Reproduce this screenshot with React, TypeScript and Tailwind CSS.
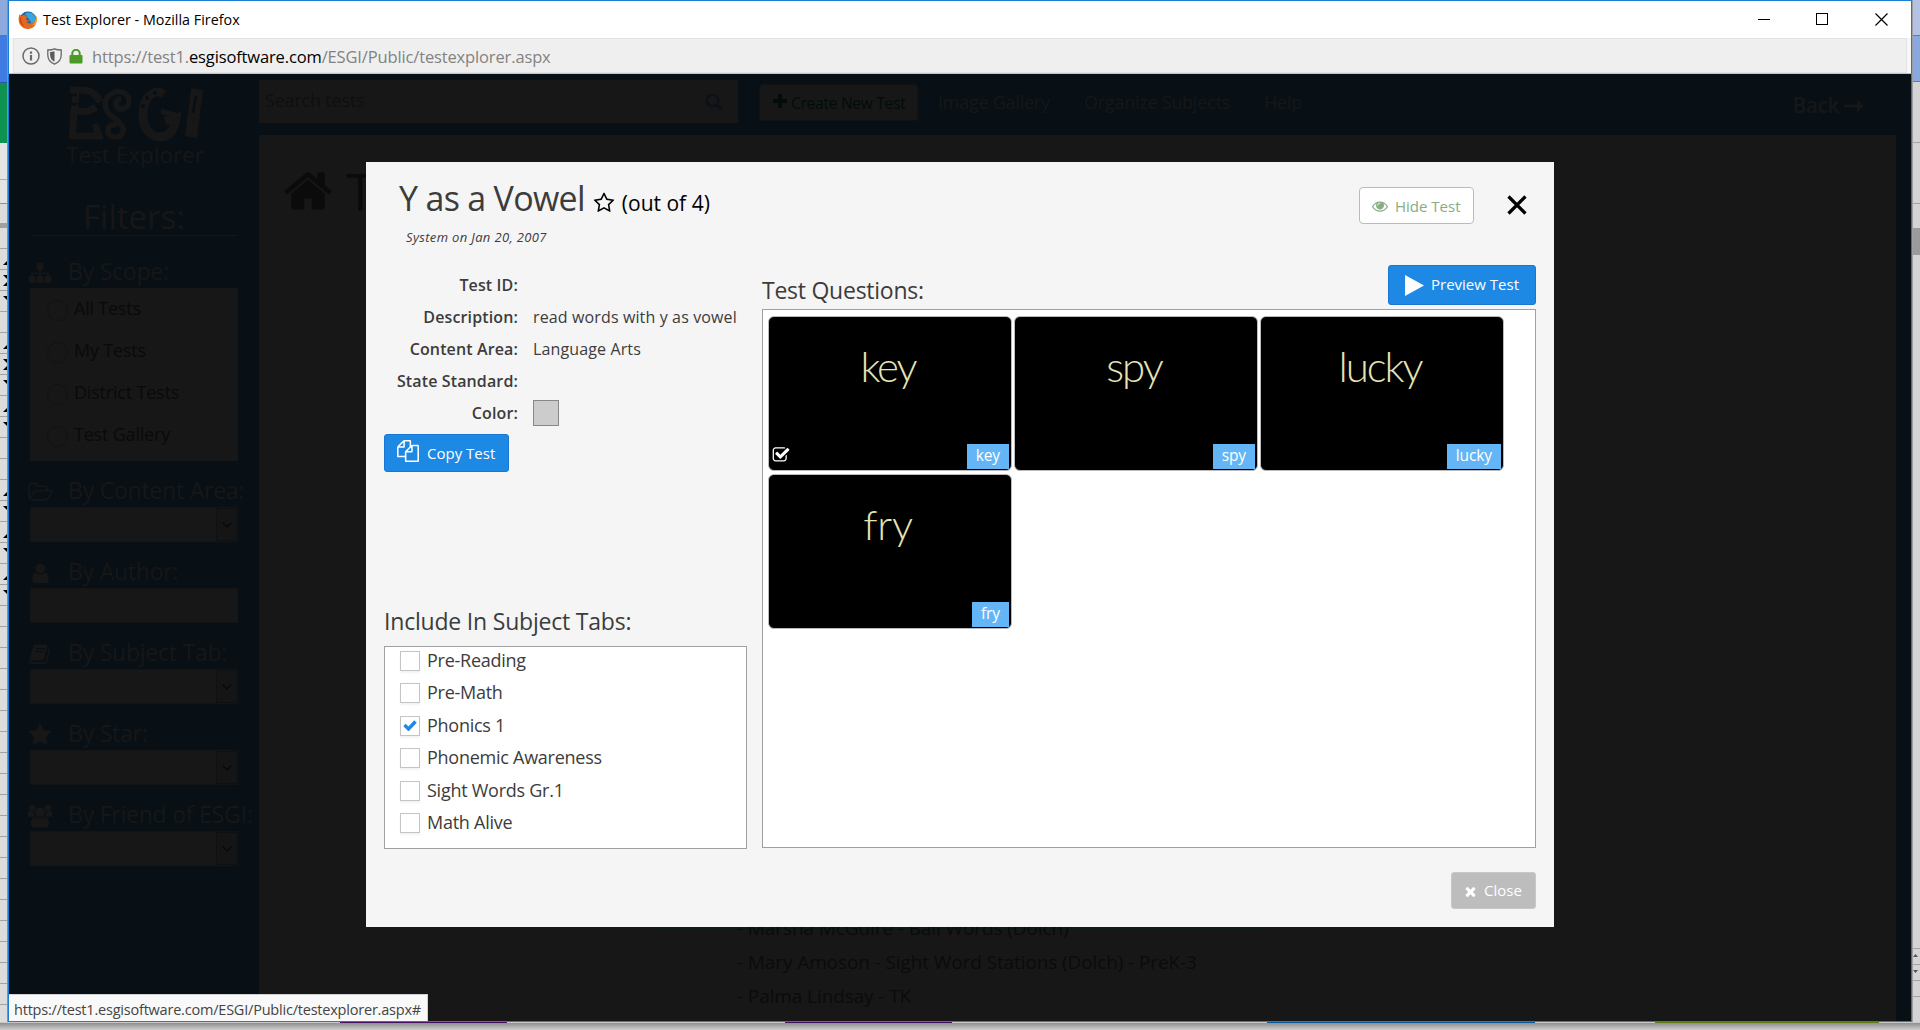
import type { ReactNode } from 'react';

const STAR =
  'M1728 647q0 22-26 48l-363 354 86 500q1 7 1 20 0 21-10.5 35.5t-30.5 14.5q-19 0-40-12l-449-236-449 236q-22 12-40 12-21 0-31.5-14.5t-10.5-35.5q0-6 2-20l86-500-364-354q-25-27-25-48 0-37 56-46l502-73 225-455q19-41 49-41t49 41l225 455 502 73q56 9 56 46z';
const STAR_O =
  'M1201 1004l306-297-422-62-189-382-189 382-422 62 306 297-73 421 378-199 377 199zm527-357q0 22-26 48l-363 354 86 500q1 7 1 20 0 50-41 50-19 0-40-12l-449-236-449 236q-22 12-40 12-21 0-31.5-14.5t-10.5-35.5q0-6 2-20l86-500-364-354q-25-27-25-48 0-37 56-46l502-73 225-455q19-41 49-41t49 41l225 455 502 73q56 9 56 46z';
const TIMES =
  'M1490 1322q0 40-28 68l-136 136q-28 28-68 28t-68-28l-294-294-294 294q-28 28-68 28t-68-28l-136-136q-28-28-28-68t28-68l294-294-294-294q-28-28-28-68t28-68l136-136q28-28 68-28t68 28l294 294 294-294q28-28 68-28t68 28l136 136q28 28 28 68t-28 68l-294 294 294 294q28 28 28 68z';
const EYE =
  'M1664 960q-152-236-381-353 61 104 61 225 0 185-131.5 316.5t-316.5 131.5-316.5-131.5-131.5-316.5q0-121 61-225-229 117-381 353 133 205 333.5 326.5t434.5 121.5 434.5-121.5 333.5-326.5zm-720-384q0-20-14-34t-34-14q-125 0-214.5 89.5t-89.5 214.5q0 20 14 34t34 14 34-14 14-34q0-86 61-147t147-61q20 0 34-14t14-34zm848 384q0 34-20 69-140 230-376.5 368.5t-499.5 138.5-499.5-139-376.5-368q-20-35-20-69t20-69q140-229 376.5-368t499.5-139 499.5 139 376.5 368q20 35 20 69z';
const CHECK_SQUARE =
  'M1472 930v318q0 119-84.5 203.5t-203.5 84.5h-832q-119 0-203.5-84.5t-84.5-203.5v-832q0-119 84.5-203.5t203.5-84.5h832q63 0 117 25 15 7 18 23 3 17-9 29l-49 49q-10 10-23 10-3 0-9-2-23-6-45-6h-832q-66 0-113 47t-47 113v832q0 66 47 113t113 47h832q66 0 113-47t47-113v-254q0-13 9-22l64-64q10-10 23-10 6 0 12 3 20 8 20 29zm231-489l-814 814q-24 24-57 24t-57-24l-430-430q-24-24-24-57t24-57l110-110q24-24 57-24t57 24l263 263 647-647q24-24 57-24t57 24l110 110q24 24 24 57t-24 57z';
const FILES =
  'M1696 384q40 0 68 28t28 68v1216q0 40-28 68t-68 28h-960q-40 0-68-28t-28-68v-288h-544q-40 0-68-28t-28-68v-672q0-40 20-88t48-76l408-408q28-28 76-48t88-20h416q40 0 68 28t28 68v328q68-40 128-40h416zm-544 213l-299 299h299v-299zm-640-384l-299 299h299v-299zm196 647l316-316v-416h-384v416q0 40-28 68t-68 28h-416v640h512v-256q0-40 20-88t48-76zm956 804v-1152h-384v416q0 40-28 68t-68 28h-416v640h896z';
const HOME =
  'M1472 992v480q0 26-19 45t-45 19h-384v-384h-256v384h-384q-26 0-45-19t-19-45v-480q0-1 .5-3t.5-3l575-474 575 474q1 2 1 6zm223-69l-62 74q-8 9-21 11h-3q-13 0-21-7l-692-577-692 577q-12 8-24 7-13-2-21-11l-62-74q-8-10-7-23.5t11-21.5l719-599q32-26 76-26t76 26l244 204v-195q0-14 9-23t23-9h192q14 0 23 9t9 23v408l219 182q10 8 11 21.5t-7 23.5z';
const USER =
  'M1536 1399q0 109-62.5 187t-150.5 78h-854q-88 0-150.5-78t-62.5-187q0-85 8.5-160.5t31.5-152 58.5-131 94-89 134.5-34.5q131 128 313 128t313-128q76 0 134.5 34.5t94 89 58.5 131 31.5 152 8.5 160.5zm-256-887q0 159-112.5 271.5t-271.5 112.5-271.5-112.5-112.5-271.5 112.5-271.5 271.5-112.5 271.5 112.5 112.5 271.5z';

function Glyph({ d, className }: { d: string; className: string }) {
  return (
    <svg viewBox="0 0 1792 1792" fill="currentColor" className={className}>
      <path d={d} />
    </svg>
  );
}

function SitemapIcon() {
  return (
    <svg viewBox="0 0 24 22" className="h-[22px] w-6 fill-[#171717]">
      <rect x="8.5" y="1" width="7" height="7" rx="1" />
      <rect x="0.5" y="14" width="7" height="7" rx="1" />
      <rect x="8.5" y="14" width="7" height="7" rx="1" />
      <rect x="16.5" y="14" width="7" height="7" rx="1" />
      <path d="M11.2 8h1.6v6h-1.6zM3.2 10.4h17.6v1.5H3.2zM3.2 10.4h1.6V14H3.2zM19.2 10.4h1.6V14h-1.6z" />
    </svg>
  );
}

function FolderIcon() {
  return (
    <svg viewBox="0 0 25 20" fill="none" stroke="#171717" strokeWidth="1.6" strokeLinejoin="round" className="h-5 w-[25px]">
      <path d="M1.2 15.5V3.4a2 2 0 0 1 2-2h3.6a2 2 0 0 1 2 2v.8h8.4a2 2 0 0 1 2 2v2.6M1.4 16.6l4.6-6.4a3.4 3.4 0 0 1 2.8-1.4h14.4c.9 0 1.1.7.7 1.4l-4.2 6.3a3.4 3.4 0 0 1-2.7 1.4H3.2c-1.1 0-1.8-.6-1.8-1.3z" />
    </svg>
  );
}

function BookIcon() {
  return (
    <svg viewBox="0 0 24 22" className="h-[22px] w-6">
      <path
        d="M7.5 1.5h10.3c1.3 0 1.8 1 1.5 2l-3.4 12c-.4 1.3-1.3 1.8-2.5 1.8H3.800c-1 0-1.300.6-1 1.200.3.6 1 .8 1.800.8h11.200c1 0 1.500-.5 1.800-1.400L21.200 5c.8.4 1.300 1.100 1 2l-3.500 12c-.4 1.300-1.400 2-2.700 2H4.200C2 21 .6 19.100 1.200 17.200L5.200 3.500c.4-1.300 1.200-2 2.300-2z"
        fill="#171717"
      />
      <path d="M8.2 5.6h8.5M7.2 8.7h8.5" stroke="#080f15" strokeWidth="1.3" />
    </svg>
  );
}

function UsersIcon() {
  return (
    <svg viewBox="0 0 26 24" className="h-6 w-[26px] fill-[#171717]">
      <circle cx="5.3" cy="4" r="3.2" />
      <circle cx="20.7" cy="4" r="3.2" />
      <circle cx="13" cy="8.5" r="5" />
      <path d="M.5 11c0-2.600.8-4.200 2.200-4.200 1 .9 3 1.200 4.300.8-.5 2 0 3.800 1 5.100H3C1.300 12.700.5 12.300.5 11zM25.500 11c0-2.600-.8-4.200-2.200-4.200-1 .9-3 1.200-4.300.8.5 2 0 3.800-1 5.100h5c1.700 0 2.500-.4 2.500-1.700zM4 19.800c0-4 1.200-7 4.200-7 2.400 2 7.200 2 9.600 0 3 0 4.200 3 4.200 7 0 2.200-1.300 3.700-3.500 3.700h-11C5.300 23.500 4 22 4 19.800z" />
    </svg>
  );
}

function FirefoxIcon() {
  return (
    <svg viewBox="0 0 20 20" className="h-5 w-5">
      <circle cx="10" cy="10" r="8.5" fill="#1f5fa8" />
      <path d="M7 3.500c4-2.500 9-.5 10.200 3.500.8 3-.7 6-3.200 7z" fill="#36a6dd" />
      <path
        d="M1.600 4.200C0 8 .3 13.200 3.300 16.300c3.700 3.700 9.700 3.500 13-.1 3-3.300 3.300-8 1.300-11.400.4 2.900 0 5.400-1.800 7-2.500 2.200-6 1.800-7.300-.1 1.500.2 2.500-.5 3-1.300-2 .3-3.400-.3-3.600-1.800.9-.4 1.700-.8 1.800-1.700-1.200-.2-2-.8-2.300-2-1.800-.2-3 .4-3.800 1.300-.8-.5-1.200-1.200-2-2z"
        fill="#e4691c"
      />
      <path d="M17.600 4.800c.9 3.600.2 8.600-3.400 10.800 4-.6 5.700-6 3.400-10.800z" fill="#f9c440" />
      <path d="M2 7.500c-.5 3.500 1 7.500 4.500 9C4 14 3 11 3.200 8.500z" fill="#c63d14" />
    </svg>
  );
}

function FilterHead({ icon, children }: { icon: ReactNode; children: ReactNode }) {
  return (
    <div className="flex h-[34px] shrink-0 items-center">
      <span className="flex w-[38px] shrink-0 justify-start pt-1">
        <span className="-ml-[3px] flex w-[26px] shrink-0 items-center justify-center">{icon}</span>
      </span>
      <span className="text-[23px] leading-[34px] tracking-[-0.23px] whitespace-nowrap">{children}</span>
    </div>
  );
}

function Select({ arrow = true }: { arrow?: boolean }) {
  return (
    <div className="mb-3 flex h-[35px] w-[208px] shrink-0 justify-end border border-[#141414] bg-[#171717]">
      {arrow && (
        <span className="flex w-[21px] items-center justify-center border border-[#101010] bg-[#151515]">
          <svg viewBox="0 0 10 6" className="h-[6px] w-[10px]" fill="none" stroke="#070707" strokeWidth="1.2">
            <path d="M.7.7 5 5 9.3.7" />
          </svg>
        </span>
      )}
    </div>
  );
}

function Sidebar() {
  return (
    <aside className="flex w-[250px] shrink-0 flex-col bg-[#080f15] pl-[21px] text-[#171717]">
      <div className="flex h-[94px] w-[208px] flex-col items-center pl-[2px]">
        <svg viewBox="0 0 136 58" className="mt-[11px] h-[58px] w-[136px] shrink-0" fill="none" stroke="#171717">
          <path d="M9 4 5 54M4 51h28l-4-12M9 25c10 3 14 1 20-3M3 5h14c8 1 13 5 16 12" strokeWidth="7" />
          <path d="M2 10h8M2 19h8" stroke="#080f15" strokeWidth="2.5" />
          <path d="M54 14c-4 0-7 4-4 8s12 2 12-6c0-9-11-12-18-7-9 6-7 17 2 23 9 7 13 13 8 18-5 4-14 2-13-5 0-5 6-7 8-3" strokeWidth="5.5" />
          <path d="M97 9c-10-6-20 3-21 18-1 14 6 25 17 25 9 0 14-6 16-19l-11 3" strokeWidth="9" />
          <path d="m114 32-20-6" strokeWidth="5" />
          <path d="m130 4-6 48" strokeWidth="12" />
          <path d="m129 11-3 17" stroke="#080f15" strokeWidth="2.5" />
          <g fill="#080f15" stroke="none">
            <circle cx="88" cy="8" r="2" />
            <circle cx="80" cy="13" r="2" />
            <circle cx="76" cy="21" r="2" />
          </g>
        </svg>
        <div className="mt-[-2px] text-[22.5px] leading-[28px] whitespace-nowrap">Test Explorer</div>
      </div>
      <div className="mt-[27px] h-10 w-[208px] text-center text-[33px] leading-[44px]">Filters:</div>
      <div className="ml-[2px] w-[205px] border-t border-[#171717]" />
      <div className="h-[18px]" />
      <FilterHead icon={<SitemapIcon />}>By Scope:</FilterHead>
      <div className="mb-[12px] flex h-[173px] w-[208px] shrink-0 flex-col bg-[#171717] pl-[17px] text-lg text-[#0a0a0a]">
        {['All Tests', 'My Tests', 'District Tests', 'Test Gallery'].map((t) => (
          <div key={t} className="flex h-[42px] items-center gap-[6px]">
            <span className="mt-[2px] h-[21px] w-[21px] rounded-full border border-[#121212]" />
            <span className="mb-[2px] tracking-[-0.2px]">{t}</span>
          </div>
        ))}
      </div>
      <FilterHead icon={<FolderIcon />}>By Content Area:</FilterHead>
      <Select />
      <FilterHead icon={<Glyph d={USER} className="h-[23px] w-[23px]" />}>By Author:</FilterHead>
      <Select arrow={false} />
      <FilterHead icon={<BookIcon />}>By Subject Tab:</FilterHead>
      <Select />
      <FilterHead icon={<Glyph d={STAR} className="h-[24px] w-[24px]" />}>By Star:</FilterHead>
      <Select />
      <FilterHead icon={<UsersIcon />}>By Friend of ESGI:</FilterHead>
      <Select />
    </aside>
  );
}

function TopBar() {
  return (
    <div className="flex h-[61px] shrink-0 text-lg text-[#171717]">
      <div className="mt-[6px] flex h-[43px] w-[479px] shrink-0 items-center justify-between bg-[#171717] pr-[15px] pl-[6px] text-[#0f0f0f]">
        <span className="mb-[4px] tracking-[-0.2px]">Search tests</span>
        <svg viewBox="0 0 18 18" className="h-[18px] w-[18px]" fill="none" stroke="#0a1118" strokeWidth="2.6">
          <circle cx="7.5" cy="7.5" r="5.8" />
          <path d="m12 12 4.5 4.5" strokeWidth="3" />
        </svg>
      </div>
      <div className="mt-[10px] ml-[21px] flex h-[37px] w-[159px] shrink-0 items-center rounded border border-[#131313] bg-[#171717] pl-[13px] text-[#020c09]">
        <svg viewBox="0 0 14 14" className="mr-[4px] mb-1 h-[14px] w-[14px]" fill="#020c09">
          <path d="M5 0h4v5h5v4H9v5H5V9H0V5h5z" />
        </svg>
        <span className="mt-px text-[15.5px] tracking-[-0.25px] whitespace-nowrap">Create New Test</span>
      </div>
      <div className="mt-[14px] flex pl-5 whitespace-nowrap">
        <span className="w-[146px] tracking-[-0.25px]">Image Gallery</span>
        <span className="w-[180px] tracking-[-0.25px]">Organize Subjects</span>
        <span className="tracking-[-0.2px]">Help</span>
      </div>
      <div className="mt-[16px] mr-[47px] ml-auto flex items-start gap-[5px] text-[21px] font-semibold">
        <span className="leading-[30px] tracking-[-0.5px]">Back</span>
        <svg viewBox="0 0 20 12" className="mt-[10px] h-3 w-5" fill="#171717">
          <path d="M0 4.500h13V0l7 6-7 6V7.500H0z" />
        </svg>
      </div>
    </div>
  );
}

function MainPanel() {
  return (
    <div className="mr-[15px] flex flex-1 flex-col bg-[#171717] text-[#0b0b0b]">
      <div className="flex h-[110px] shrink-0 items-start pt-[25px] pl-[23px]">
        <Glyph d={HOME} className="mt-[5px] h-[52px] w-[52px]" />
        <span className="ml-[12px] text-[52px] leading-[62px]">T</span>
      </div>
      <div className="-mt-[84px] ml-[403px] h-[768px] w-[597px] shrink-0 border border-[#0c1b18]" />
      <div className="-mt-[18px] ml-[478px] flex flex-col text-[19px] leading-[34px] tracking-[-0.1px] whitespace-nowrap">
        <span>- Marsha McGuire - Ball Words (Dolch)</span>
        <span>- Mary Amoson - Sight Word Stations (Dolch) - PreK-3</span>
        <span>- Palma Lindsay - TK</span>
      </div>
    </div>
  );
}

const DETAILS: [string, ReactNode][] = [
  ['Test ID:', ''],
  ['Description:', 'read words with y as vowel'],
  ['Content Area:', 'Language Arts'],
  ['State Standard:', ''],
  ['Color:', <span key="swatch" className="block h-[26px] w-[26px] border border-[#888] bg-[#ccc]" />],
];

const SUBJECTS = ['Pre-Reading', 'Pre-Math', 'Phonics 1', 'Phonemic Awareness', 'Sight Words Gr.1', 'Math Alive'];

function QuestionCard({ word, checked }: { word: string; checked?: boolean }) {
  return (
    <div className="relative flex h-[155px] w-[244px] flex-col items-center rounded-[6px] border border-[#bbb] bg-black">
      <span
        className={`mt-[24px] mr-[4px] font-['Lato'] text-[42px] leading-[50px] font-light text-[#e6e3b4] ${
          word === 'fry' ? 'tracking-[-0.2px]' : 'tracking-[-2px]'
        }`}
      >
        {word}
      </span>
      {checked && <Glyph d={CHECK_SQUARE} className="absolute bottom-[6px] left-[3px] h-[18px] w-[18px] text-white" />}
      <span className="absolute right-[2px] bottom-[1px] h-[25px] bg-[#64b5f6] px-[9px] text-[15.5px] leading-[23px] tracking-[-0.1px] text-white">
        {word}
      </span>
    </div>
  );
}

function Modal() {
  return (
    <div className="absolute top-[88px] left-[357px] flex h-[765px] w-[1188px] flex-col bg-[#f5f5f5] pr-[18px] pl-[18px] text-[#3c3c3c]">
      <header className="flex h-[95px] shrink-0 pl-[15px]">
        <div className="flex flex-col pt-[8px]">
          <div className="flex h-[57px] items-start text-black">
            <h1 className="text-[34px] leading-[57px] tracking-[-0.7px] text-[#3c3c3c]">Y as a Vowel</h1>
            <Glyph d={STAR_O} className="mt-[22px] ml-[8px] h-[22px] w-[22px]" />
            <span className="ml-[7px] text-[21px] leading-[66px]">(out of 4)</span>
          </div>
          <p className="pl-[7px] text-[13px] leading-[20px] tracking-[0.35px] italic">System on Jan 20, 2007</p>
        </div>
        <button className="mt-[25px] ml-auto flex h-[37px] w-[115px] items-center rounded border border-[#a5cba5] bg-white pl-[12px] text-[15px] text-[#85ac85]">
          <Glyph d={EYE} className="mt-px mr-[7px] h-4 w-4" />
          <span className="mt-px whitespace-nowrap">Hide Test</span>
        </button>
        <svg viewBox="0 0 20 20" className="mt-[33px] mr-[9px] ml-[33px] h-5 w-5" fill="none" stroke="#000" strokeWidth="3.2">
          <path d="m1.5 1.5 17 17M18.5 1.5l-17 17" />
        </svg>
      </header>
      <div className="flex gap-[15px]">
        <section className="flex w-[363px] shrink-0 flex-col pt-[12px]">
          {DETAILS.map(([label, value]) => (
            <div key={label} className="flex h-8 items-center gap-[15px] text-base leading-8 tracking-[0.13px] whitespace-nowrap">
              <span className="w-[134px] shrink-0 text-right font-semibold">{label}</span>
              <span>{value}</span>
            </div>
          ))}
          <button className="mt-[5px] flex h-[38px] w-[125px] items-center rounded-[3px] border border-[#1976d2] bg-[#1e88e5] pl-[12px] text-[15px] text-white">
            <Glyph d={FILES} className="mr-[8px] mb-[4px] h-[22px] w-[22px]" />
            <span className="whitespace-nowrap">Copy Test</span>
          </button>
          <h2 className="mt-[133px] text-[23px] leading-8 tracking-[-0.2px]">Include In Subject Tabs:</h2>
          <ul className="mt-[9px] h-[203px] overflow-hidden border border-[#a0a0a0] bg-white pl-[15px]">
            {SUBJECTS.map((s, i) => (
              <li key={s} className={`flex h-[32.5px] items-center gap-[7px] text-lg ${i === 0 ? '-mt-[2.75px]' : ''}`}>
                <span className="flex h-5 w-5 items-center justify-center border border-[#c4c4c4] bg-white shadow-[0_2px_2px_rgba(0,0,0,0.05)]">
                  {s === 'Phonics 1' && (
                    <svg viewBox="0 0 14 11" className="h-[11px] w-[14px]" fill="none" stroke="#1e88e5" strokeWidth="3.4">
                      <path d="m1.5 5 4 4 7-7.5" />
                    </svg>
                  )}
                </span>
                <span className="mb-[1.5px] leading-7 tracking-[-0.26px]">{s}</span>
              </li>
            ))}
          </ul>
        </section>
        <section className="flex flex-1 flex-col">
          <div className="flex h-[52px] items-start justify-between">
            <h2 className="mt-[17px] text-[23px] leading-8 tracking-[-0.25px]">Test Questions:</h2>
            <button className="mt-[8px] flex h-10 w-[148px] items-center rounded-[3px] border border-[#1976d2] bg-[#1e88e5] pl-[16px] text-[15px] text-white">
              <svg viewBox="0 0 19 21" className="mt-[1px] mr-[7px] h-[21px] w-[19px]" fill="#fff">
                <path d="M0 0v21l19-10.5z" />
              </svg>
              <span className="mb-px whitespace-nowrap">Preview Test</span>
            </button>
          </div>
          <div className="flex h-[539px] flex-wrap content-start gap-x-[2px] gap-y-[3px] border border-[#a0a0a0] bg-white pt-[6px] pl-[5px]">
            <QuestionCard word="key" checked />
            <QuestionCard word="spy" />
            <QuestionCard word="lucky" />
            <QuestionCard word="fry" />
          </div>
        </section>
      </div>
      <footer className="flex justify-end pt-[23px]">
        <button className="flex h-[37px] w-[85px] items-center rounded-[3px] border border-[#c8c8c8] bg-[#bdbdbd] pl-[11px] text-[15px] text-white">
          <Glyph d={TIMES} className="mt-[2px] mr-[6px] h-[15px] w-[15px]" />
          <span>Close</span>
        </button>
      </footer>
    </div>
  );
}

function BrowserChrome() {
  return (
    <div className="shrink-0">
      <div className="flex h-[37px] items-center bg-white pl-[9px] text-black">
        <FirefoxIcon />
        <span className="ml-[5px] text-[14.3px] tracking-[0.02px]">Test Explorer - Mozilla Firefox</span>
        <svg viewBox="0 0 130 13" className="mr-[23px] ml-auto h-[13px] w-[130px]" fill="none" stroke="#000" shapeRendering="crispEdges">
          <path d="M0 6.500h12" />
          <rect x="58.5" y=".5" width="11" height="11" />
          <path d="m117.500.5 12 12M129.500.5l-12 12" shapeRendering="auto" strokeWidth="1.2" />
        </svg>
      </div>
      <div className="h-[36px] border-b border-[#c4c4c4] bg-[#f7f7f7] px-1">
        <div className="flex h-[35px] items-center border border-[#e2e2e2] bg-[#efefef] pl-[8px]">
          <svg viewBox="0 0 18 18" className="mt-px h-[18px] w-[18px]" fill="none" stroke="#6a6a6a" strokeWidth="1.5">
            <circle cx="9" cy="9" r="8" />
            <path d="M9 8v5.500M9 4.500v2.200" strokeWidth="2.2" />
          </svg>
          <svg viewBox="0 0 15 17" className="mt-px ml-[7px] h-[17px] w-[15px]" fill="none" stroke="#6a6a6a" strokeWidth="1.3">
            <path d="M7.500.8c2 1 4.300 1.200 6.700 1.200v5c0 4-2.400 7.400-6.700 9.200C3.200 14.400.8 11 .8 7V2c2.400 0 4.700-.2 6.700-1.200z" />
            <path d="M7.500 3.200v10.600C4.600 12.200 3.100 10 3.100 7V4c1.500 0 3-.2 4.400-.8z" fill="#5a5a5a" stroke="none" />
          </svg>
          <svg viewBox="0 0 14 15" className="mt-[2px] ml-[7px] h-[15px] w-[14px]">
            <rect x=".5" y="6" width="13" height="8.5" rx="1" fill="#4b9a25" />
            <path d="M3.300 7V4.500a3.700 3.700 0 0 1 7.400 0V7" fill="none" stroke="#4b9a25" strokeWidth="2" />
          </svg>
          <span className="mt-[3px] ml-[9px] text-[16.5px] tracking-[-0.14px] text-[#828282]">
            https://test1.<span className="text-black">esgisoftware.com</span>/ESGI/Public/testexplorer.aspx
          </span>
        </div>
      </div>
    </div>
  );
}

const MARKS_UP = [4, 25, 88, 109, 151, 235, 277, 319];
const MARKS_DOWN = [18, 39, 102, 123, 165, 249, 291, 333];

function SheetEdge() {
  return (
    <div className="flex w-[8px] shrink-0 flex-col border-r border-[#8a8f96] bg-[#dcdcdc]">
      <div className="h-[35px] bg-[#8fa9dc]" />
      <div className="h-[47px] border-t border-[#5577b0] bg-[#3f7be0]" />
      <div className="h-[61px] border-t border-[#2a55a0] bg-[#0f9150]" />
      <div className="h-[37px] border-b border-[#b0b0b0] bg-[#e4e4e4]" />
      <div className="h-[24px] border-b border-[#909090] bg-[#e4e4e4]" />
      <div className="h-[19px]" />
      <div className="h-[5px] bg-[#a0a0a0]" />
      <div className="flex-1 bg-[repeating-linear-gradient(180deg,transparent_0_20px,#a3a3a3_20px_21px)] pt-[29px]">
        <svg viewBox="0 0 7 345" className="h-[345px] w-[7px]" fill="#000">
          {MARKS_UP.map((y) => (
            <path key={y} d={`M3 ${y + 4}h4v-4z`} />
          ))}
          {MARKS_DOWN.map((y) => (
            <path key={y} d={`M3 ${y}h4v4z`} />
          ))}
        </svg>
      </div>
    </div>
  );
}

export default function App() {
  return (
    <div className="flex h-[1030px] w-[1920px] flex-col overflow-hidden bg-[#c9c9c9] font-['Open_Sans',sans-serif]">
      <div className="flex h-[1022px]">
        <SheetEdge />
        <div className="relative flex w-[1904px] flex-col border border-[#1a7fd4]">
          <BrowserChrome />
          <div className="relative flex h-[947px] bg-[#080f15]">
            <Sidebar />
            <div className="flex min-w-0 flex-1 flex-col">
              <TopBar />
              <MainPanel />
            </div>
            <Modal />
            <div className="absolute bottom-0 left-0 h-[27px] w-[419px] border-t border-r border-[#d0d0d0] bg-[#f9f9f9] pl-[5px] text-[14.5px] leading-[30px] tracking-[-0.21px] whitespace-nowrap text-[#444]">
              https://test1.esgisoftware.com/ESGI/Public/testexplorer.aspx#
            </div>
          </div>
        </div>
        <div className="flex flex-1 flex-col border-l border-[#9a9fa6] bg-[#d4d4d4]">
          <div className="h-[35px] bg-[#b4c3e4]" />
          <div className="h-[47px] border-y border-[#5c79b8] bg-[#8aa8e0]" />
          <div className="h-[146px] bg-[repeating-linear-gradient(180deg,transparent_0_60px,#a3a3a3_60px_61px)]" />
          <div className="h-[27px] bg-[#9b9b9b]" />
          <div className="h-[693px]" />
          <div className="h-[60px] bg-[repeating-linear-gradient(180deg,#a3a3a3_0_1px,transparent_1px_16px)]">
            <svg viewBox="0 0 7 40" className="h-10 w-[7px]" fill="#555">
              <path d="M0 9h5L2.500 6zM0 22h5l-2.500 3z" />
            </svg>
          </div>
        </div>
      </div>
      <div className="flex h-px shrink-0">
        <div className="ml-[340px] w-[167px] bg-[#45105f]" />
        <div className="ml-[278px] w-[167px] bg-[#45105f]" />
        <div className="ml-[315px] w-[268px] bg-[#0a5a99]" />
        <div className="ml-[120px] w-[224px] bg-[#5c7d14]" />
      </div>
      <div className="flex-1 bg-linear-to-b from-[#8e8e8e] to-[#cfcfcf]" />
    </div>
  );
}
